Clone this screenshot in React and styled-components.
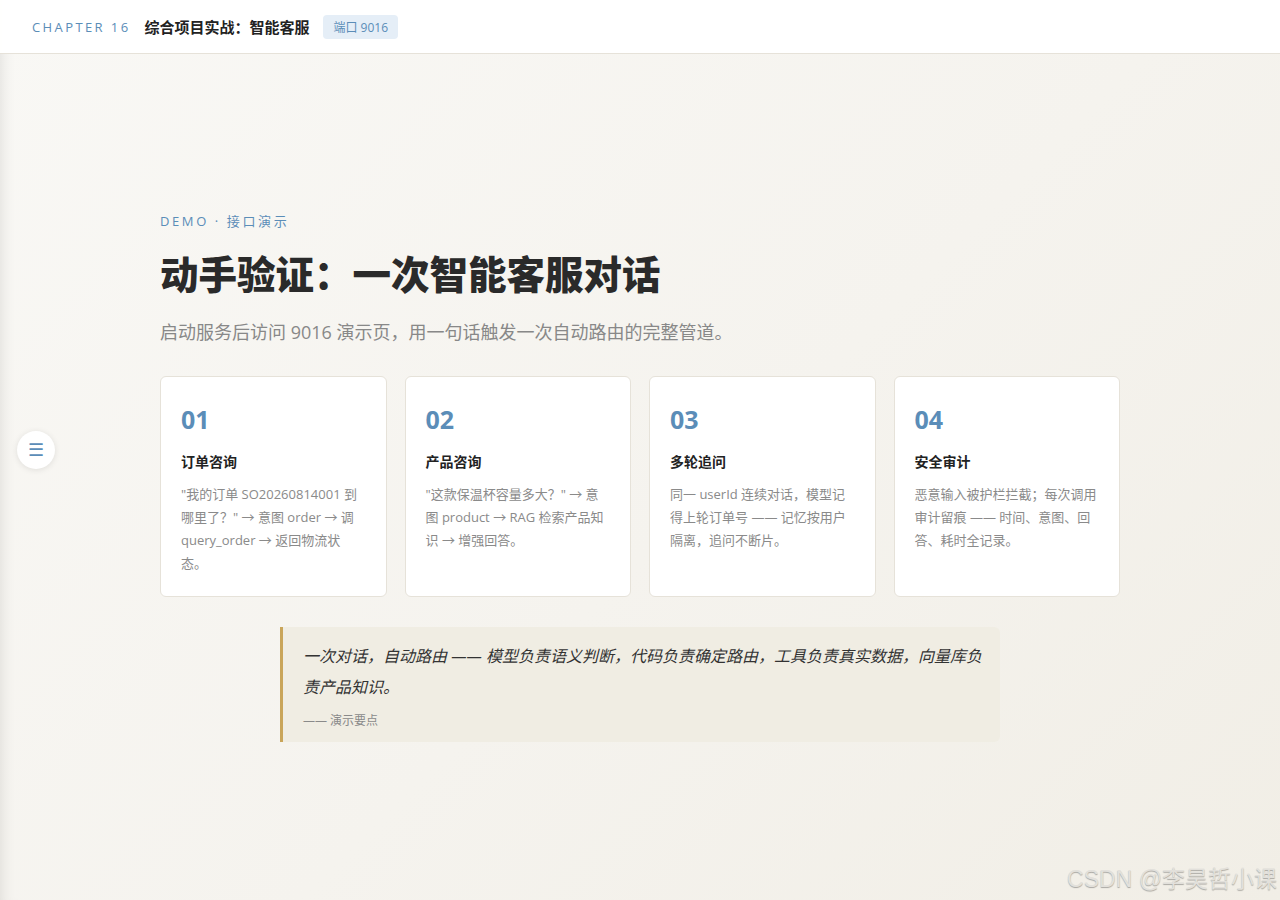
import React from "react";
import styled, { createGlobalStyle } from "styled-components";

const GlobalStyle = createGlobalStyle`
  html, body {
    margin: 0;
    padding: 0;
    height: 100%;
  }
  body {
    font-family: "Open Sans", "Noto Sans CJK SC", sans-serif;
    color: #2a2a2a;
    background: linear-gradient(135deg, #f9f8f5 0%, #f5f3ee 55%, #f1eee6 100%);
    overflow: hidden;
  }
  #root {
    height: 100vh;
  }
`;

const Page = styled.div`
  height: 100vh;
  display: flex;
  flex-direction: column;
  position: relative;
  box-shadow: inset 14px 0 16px -14px rgba(0, 0, 0, 0.12);
`;

const Header = styled.header`
  height: 53px;
  flex-shrink: 0;
  display: flex;
  align-items: center;
  gap: 14px;
  padding: 0 32px;
  background: rgba(255, 255, 255, 0.96);
  border-bottom: 1px solid #e6e2d9;
`;

const Chapter = styled.span`
  font-size: 13px;
  letter-spacing: 2.4px;
  color: #5b8db8;
`;

const HeaderTitle = styled.span`
  font-size: 15px;
  font-weight: 700;
  color: #222;
`;

const Badge = styled.span`
  font-size: 12px;
  color: #5b8db8;
  background: #e5eef7;
  border-radius: 4px;
  padding: 3px 10px;
`;

const Main = styled.main`
  flex: 1;
  display: flex;
  flex-direction: column;
  justify-content: center;
  align-items: center;
`;

const Content = styled.section`
  width: 960px;
  display: flex;
  flex-direction: column;
`;

const Eyebrow = styled.div`
  font-size: 13px;
  letter-spacing: 2.6px;
  color: #5b8db8;
  line-height: 18px;
`;

const Title = styled.h1`
  margin: 15px 0 0;
  font-size: 38.5px;
  font-weight: 800;
  line-height: 54px;
  color: #2a2a2a;
  font-family: "Noto Sans CJK SC", sans-serif;
`;

const Subtitle = styled.p`
  margin: 19px 0 0;
  font-size: 18px;
  line-height: 28px;
  color: #888;
`;

const Grid = styled.div`
  margin-top: 30px;
  display: grid;
  grid-template-columns: repeat(4, 1fr);
  gap: 18px;
`;

const Card = styled.div`
  background: #fff;
  border: 1px solid #e6e2d9;
  border-radius: 6px;
  padding: 25px 20px 21px;
  min-height: 218px;
  box-sizing: border-box;
`;

const Num = styled.div`
  font-size: 25px;
  font-weight: 700;
  color: #5b8db8;
  line-height: 34px;
`;

const CardTitle = styled.div`
  margin-top: 16px;
  font-size: 14px;
  font-weight: 700;
  color: #222;
  line-height: 20px;
`;

const CardText = styled.p`
  margin: 11px 0 0;
  font-size: 13px;
  line-height: 23px;
  color: #8a8a8a;
`;

const Quote = styled.blockquote`
  margin: 30px auto 0;
  width: 720px;
  box-sizing: border-box;
  background: #f0ede3;
  border-left: 3px solid #c9a55a;
  border-radius: 0 6px 6px 0;
  padding: 14px 12px 12px 20px;
`;

const QuoteText = styled.p`
  margin: 0;
  font-size: 16px;
  font-style: italic;
  line-height: 31px;
  color: #333;
`;

const QuoteCite = styled.div`
  margin-top: 9px;
  font-size: 12px;
  color: #8a8a8a;
  line-height: 18px;
`;

const MenuButton = styled.button`
  position: absolute;
  left: 17px;
  top: 431px;
  width: 38px;
  height: 38px;
  border-radius: 50%;
  border: none;
  background: #fff;
  box-shadow: 0 1px 6px rgba(0, 0, 0, 0.1);
  color: #5b8db8;
  font-size: 18px;
  display: flex;
  align-items: center;
  justify-content: center;
  padding: 0;
  cursor: pointer;
`;

const Watermark = styled.div`
  position: absolute;
  right: 3px;
  bottom: 6px;
  font-family: "Liberation Sans", "Noto Sans CJK SC", sans-serif;
  font-size: 23px;
  color: #e2e0db;
  text-shadow: 0 1px 1px rgba(0, 0, 0, 0.3);
`;

const steps = [
  {
    num: "01",
    title: "订单咨询",
    text: "\"我的订单 SO20260814001 到哪里了？\" → 意图 order → 调 query_order → 返回物流状态。",
  },
  {
    num: "02",
    title: "产品咨询",
    text: "\"这款保温杯容量多大？\" → 意图 product → RAG 检索产品知识 → 增强回答。",
  },
  {
    num: "03",
    title: "多轮追问",
    text: "同一 userId 连续对话，模型记得上轮订单号 —— 记忆按用户隔离，追问不断片。",
  },
  {
    num: "04",
    title: "安全审计",
    text: "恶意输入被护栏拦截；每次调用审计留痕 —— 时间、意图、回答、耗时全记录。",
  },
];

export default function App() {
  return (
    <>
      <GlobalStyle />
      <Page>
        <Header>
          <Chapter>CHAPTER 16</Chapter>
          <HeaderTitle>综合项目实战：智能客服</HeaderTitle>
          <Badge>端口 9016</Badge>
        </Header>
        <Main>
          <Content>
            <Eyebrow>DEMO · 接口演示</Eyebrow>
            <Title>动手验证：一次智能客服对话</Title>
            <Subtitle>启动服务后访问 9016 演示页，用一句话触发一次自动路由的完整管道。</Subtitle>
            <Grid>
              {steps.map((s) => (
                <Card key={s.num}>
                  <Num>{s.num}</Num>
                  <CardTitle>{s.title}</CardTitle>
                  <CardText>{s.text}</CardText>
                </Card>
              ))}
            </Grid>
            <Quote>
              <QuoteText>
                一次对话，自动路由 —— 模型负责语义判断，代码负责确定路由，工具负责真实数据，向量库负责产品知识。
              </QuoteText>
              <QuoteCite>—— 演示要点</QuoteCite>
            </Quote>
          </Content>
        </Main>
        <MenuButton aria-label="目录">☰</MenuButton>
        <Watermark>CSDN @李昊哲小课</Watermark>
      </Page>
    </>
  );
}
